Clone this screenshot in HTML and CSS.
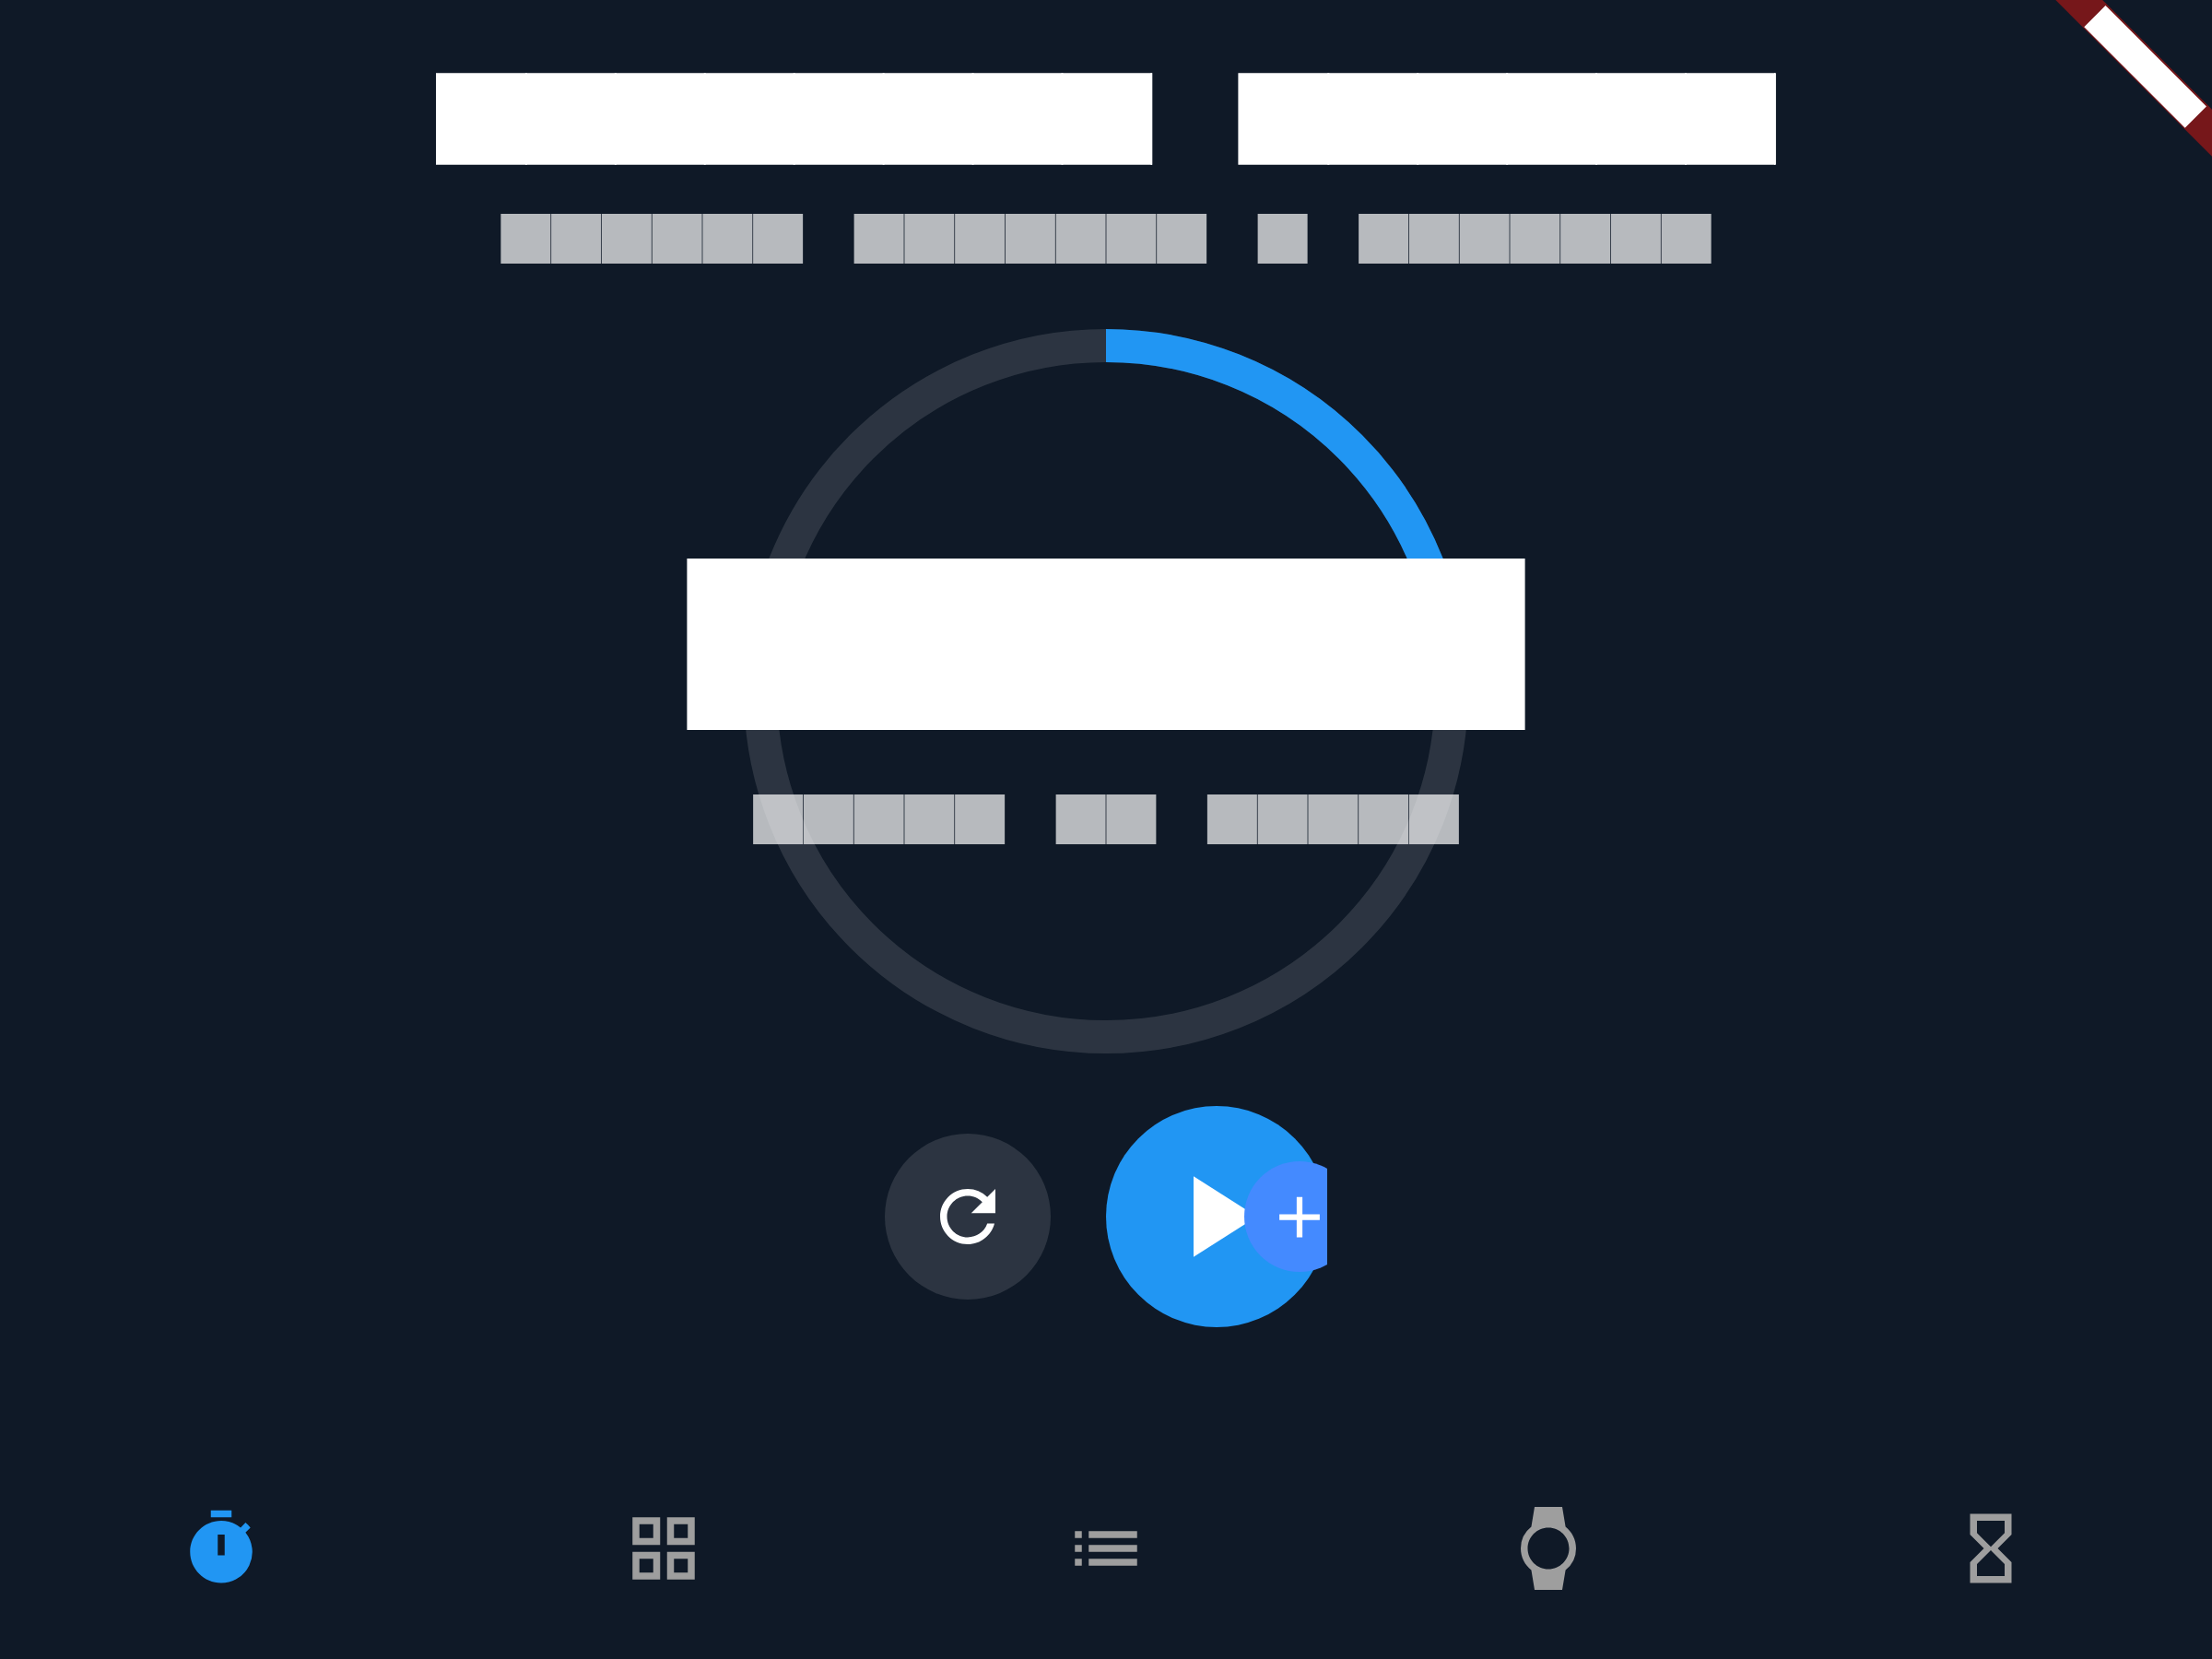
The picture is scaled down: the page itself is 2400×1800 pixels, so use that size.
FILE: index.html
```
<!DOCTYPE html>
<html lang="en">
<head>
<meta charset="utf-8">
<title>Timer</title>
<link rel="stylesheet" href="styles.css">
</head>
<body>
<div class="app">
  <header class="header">
    <!-- heading: even and odd glyph blocks overlap slightly -->
    <svg class="heading" width="1456" height="102" viewBox="472 78 1456 102">
      <g class="glyphs glyphs-heading">
        <path d="M473 129H1250"/>
        <path d="M569.93 129H1250.3"/>
        <path d="M1343.4 129H1926"/>
        <path d="M1440.3 129H1927.1"/>
      </g>
    </svg>
    <svg class="subheading" width="1316" height="54" viewBox="542 232 1316 54">
      <g class="glyphs glyphs-body">
        <path d="M543.375 259h327.75"/>
        <path d="M926.625 259h382.5"/>
        <path d="M1364.625 259h54"/>
        <path d="M1474.125 259h382.5"/>
      </g>
    </svg>
  </header>

  <main class="main">
    <svg class="dial" width="912" height="786" viewBox="744 357 912 786">
      <circle class="track" cx="1200" cy="750" r="375"/>
      <path class="progress" d="M1200 375A375 375 0 0 1 1575 750"/>
      <g class="glyphs glyphs-time">
        <path d="M745.4 699H1654.6"/>
        <path d="M926.2 699H1473.8"/>
      </g>
      <g class="glyphs glyphs-body">
        <path d="M817.125 889h273"/>
        <path d="M1145.625 889h108.75"/>
        <path d="M1309.875 889h273"/>
      </g>
    </svg>

    <div class="controls">
      <button class="round reset" aria-label="Reset">
        <svg width="90" height="90" viewBox="0 0 24 24"><path d="M17.65 6.35A7.958 7.958 0 0 0 12 4c-4.42 0-7.99 3.58-7.99 8s3.57 8 7.99 8c3.73 0 6.84-2.55 7.73-6h-2.08A5.99 5.99 0 0 1 12 18c-3.31 0-6-2.69-6-6s2.69-6 6-6c1.66 0 3.14.69 4.22 1.78L13 11h7V4z"/></svg>
      </button>
      <div class="play-wrap">
        <button class="round play" aria-label="Play">
          <svg width="150" height="150" viewBox="0 0 24 24"><path d="M8 5v14l11-7z"/></svg>
        </button>
        <button class="round add" aria-label="Add">
          <svg width="120" height="120" viewBox="0 0 120 120"><path transform="translate(22.5 23) scale(3.125)" d="M19 13h-6v6h-2v-6H5v-2h6V5h2v6h6z"/></svg>
        </button>
      </div>
    </div>
  </main>

  <nav class="nav">
    <a class="tab active" aria-label="Timer"><svg viewBox="0 0 24 24"><path fill-rule="evenodd" d="M15 1H9v2h6zM19.03 7.39l1.42-1.42c-.43-.51-.9-.99-1.41-1.41l-1.42 1.42A8.962 8.962 0 0 0 12 4c-4.97 0-9 4.03-9 9s4.02 9 9 9a8.994 8.994 0 0 0 7.03-14.61zM13 14h-2V8h2z"/></svg></a>
    <a class="tab" aria-label="Grid"><svg viewBox="0 0 24 24"><path fill-rule="evenodd" d="M3 3h8v8H3zM5 5v4h4V5zM13 3h8v8h-8zM15 5v4h4V5zM3 13h8v8H3zM5 15v4h4v-4zM13 13h8v8h-8zM15 15v4h4v-4z"/></svg></a>
    <a class="tab" aria-label="List"><svg viewBox="0 0 24 24"><path d="M3 7h2v2H3zM3 11h2v2H3zM3 15h2v2H3zM7 7h14v2H7zM7 11h14v2H7zM7 15h14v2H7z"/></svg></a>
    <a class="tab" aria-label="Watch"><svg viewBox="0 0 24 24"><path fill-rule="evenodd" d="M20 12c0-2.54-1.19-4.81-3.04-6.27L16 0H8l-.95 5.73A7.94 7.94 0 0 0 4 12c0 2.54 1.19 4.81 3.05 6.27L8 24h8l.96-5.73A7.976 7.976 0 0 0 20 12zM6 12c0-3.31 2.69-6 6-6s6 2.69 6 6-2.69 6-6 6-6-2.69-6-6z"/></svg></a>
    <a class="tab" aria-label="Hourglass"><svg viewBox="0 0 24 24"><path fill-rule="evenodd" d="M6 2v6h.01L6 8.01 10 12l-4 4 .01.01H6V22h12v-5.99h-.01L18 16l-4-4 4-3.99-.01-.01H18V2zM16 16.5V20H8v-3.5l4-4zM12 11.5l-4-4V4h8v3.5z"/></svg></a>
  </nav>

  <svg class="ribbon" width="180" height="180" viewBox="-180 0 180 180">
    <g transform="rotate(45)">
      <rect class="ribbon-band" x="-120" y="84" width="240" height="36"/>
      <rect class="ribbon-label" x="-77.4" y="86" width="154.8" height="32.8"/>
    </g>
  </svg>
</div>
</body>
</html>
```
FILE: styles.css
```
* { box-sizing: border-box; }

body { margin: 0; background: #0f1927; font-family: Roboto, sans-serif; }

svg { display: block; }

.app {
  position: relative;
  display: flex;
  flex-direction: column;
  width: 2400px;
  height: 1800px;
  overflow: hidden;
  background: #0f1927;
}

.header {
  display: flex;
  flex-direction: column;
  align-items: center;
  gap: 52px;
  padding-top: 78px;
}

.main {
  display: flex;
  flex: 1;
  flex-direction: column;
  align-items: center;
  gap: 57px;
  padding-top: 71px;
}

.glyphs { fill: none; stroke: #fff; }
.glyphs-heading { stroke-width: 99.5; stroke-dasharray: 98.9 94.96; }
.glyphs-time { stroke-width: 185.8; stroke-dasharray: 186 175.6; }
.glyphs-body { stroke: rgba(255, 255, 255, 0.7); stroke-width: 54; stroke-dasharray: 54 0.75; }

.track { fill: none; stroke: rgba(255, 255, 255, 0.12); stroke-width: 36; }
.progress { fill: none; stroke: #2196f3; stroke-width: 36; }

.controls {
  display: flex;
  align-items: center;
  gap: 60px;
}

.round {
  display: flex;
  align-items: center;
  justify-content: center;
  padding: 0;
  border: 0;
  border-radius: 50%;
  fill: #fff;
}

.reset { width: 180px; height: 180px; background: rgba(255, 255, 255, 0.12); }
.play-wrap { position: relative; width: 240px; height: 240px; overflow: hidden; }
.play { width: 240px; height: 240px; background: #2196f3; }

.add {
  position: absolute;
  top: 60px;
  left: 150px;
  width: 120px;
  height: 120px;
  background: #448aff;
}

.nav {
  display: grid;
  grid-template-columns: repeat(5, 1fr);
  height: 240px;
}

.tab { display: flex; align-items: center; justify-content: center; fill: #9e9e9e; }
.tab.active { fill: #2196f3; }
.tab svg { width: 90px; height: 90px; }

.ribbon { position: absolute; top: 0; right: 0; }
.ribbon-band { fill: #76171a; }
.ribbon-label { fill: #fff; }
```
